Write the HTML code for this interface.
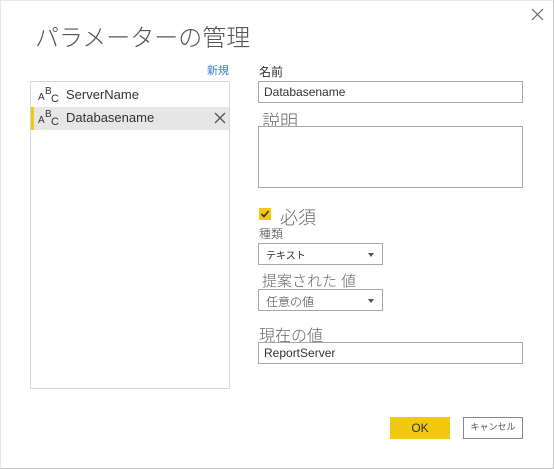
<!DOCTYPE html>
<html><head><meta charset="utf-8"><style>
*{margin:0;padding:0;box-sizing:border-box}
body{width:554px;height:469px;background:#fff;font-family:"Liberation Sans","Noto Sans CJK JP",sans-serif;color:#333;position:relative;overflow:hidden}
.frame{position:absolute;left:0;top:0;width:554px;height:469px;border:1px solid #c8c8c8;border-left-color:#e8e8e8;border-top-color:#e8e8e8}
.a{position:absolute;white-space:nowrap}
.box{position:absolute;border:1px solid #a8a8a8;background:#fff}
.abc{position:absolute;width:20px;height:18px;font-size:10px;color:#333;line-height:10px}
.abc span{position:absolute}
.tri{position:absolute;right:8px;top:9px;width:0;height:0;border-left:3px solid transparent;border-right:3px solid transparent;border-top:4px solid #555}
.lt{font-weight:300;color:#666}
</style></head><body>
<div class="frame"></div>
<div class="a lt" style="left:35px;top:18px;font-size:24px;color:#555">パラメーターの管理</div>
<svg class="a" style="left:531px;top:8px" width="13" height="13"><path d="M1 1L12 12M12 1L1 12" stroke="#666" stroke-width="1.2"/></svg>
<div class="a" style="left:207px;top:62px;font-size:11px;color:#3a7fc4">新規</div>
<div class="box" style="left:30px;top:81px;width:200px;height:308px;border-color:#d8d8d8"></div>
<div class="a" style="left:31px;top:84px;width:198px;height:22px">
 <div class="abc" style="left:7px;top:2px"><span style="left:0;top:7px">A</span><span style="left:7px;top:1px">B</span><span style="left:13px;top:8px;font-size:11px">C</span></div>
 <div class="a" style="left:35px;top:3px;font-size:13px">ServerName</div>
</div>
<div class="a" style="left:31px;top:107px;width:198px;height:23px;background:#e6e6e6;border-left:3px solid #f2c811">
 <div class="abc" style="left:4px;top:2px"><span style="left:0;top:7px">A</span><span style="left:7px;top:1px">B</span><span style="left:13px;top:8px;font-size:11px">C</span></div>
 <div class="a" style="left:32px;top:3px;font-size:13px">Databasename</div>
 <svg class="a" style="left:180px;top:5px" width="12" height="12"><path d="M1 1L11 11M11 1L1 11" stroke="#555" stroke-width="1.3"/></svg>
</div>
<div class="a" style="left:259px;top:63px;font-size:12px">名前</div>
<div class="box" style="left:258px;top:81px;width:265px;height:22px"><div class="a" style="left:5px;top:3px;font-size:12px">Databasename</div></div>
<div class="a lt" style="left:262px;top:108px;font-size:18px">説明</div>
<div class="box" style="left:258px;top:126px;width:265px;height:62px"></div>
<div class="a" style="left:259px;top:208px;width:12px;height:12px;background:#f2c811"></div>
<svg class="a" style="left:259px;top:208px" width="12" height="12"><path d="M2.5 6L5 8.5L9.5 3" stroke="#333" stroke-width="1.6" fill="none"/></svg>
<div class="a lt" style="left:280px;top:204px;font-size:18px">必須</div>
<div class="a lt" style="left:259px;top:225px;font-size:12px;color:#444">種類</div>
<div class="box" style="left:258px;top:243px;width:125px;height:22px"><div class="a" style="left:7px;top:3px;font-size:10px">テキスト</div><div class="tri"></div></div>
<div class="a lt" style="left:262px;top:270px;font-size:15px">提案された 値</div>
<div class="box" style="left:258px;top:289px;width:125px;height:22px"><div class="a lt" style="left:7px;top:3px;font-size:12px;color:#444">任意の値</div><div class="tri"></div></div>
<div class="a lt" style="left:259px;top:322px;font-size:16px">現在の値</div>
<div class="box" style="left:258px;top:342px;width:265px;height:22px"><div class="a" style="left:5px;top:3px;font-size:12px">ReportServer</div></div>
<div class="a" style="left:390px;top:417px;width:60px;height:22px;background:#f2c811;text-align:center;font-size:12px;line-height:22px;color:#333">OK</div>
<div class="a" style="left:463px;top:417px;width:60px;height:22px;border:1px solid #888;text-align:center;font-size:9px;line-height:18px;color:#555">キャンセル</div>
</body></html>
